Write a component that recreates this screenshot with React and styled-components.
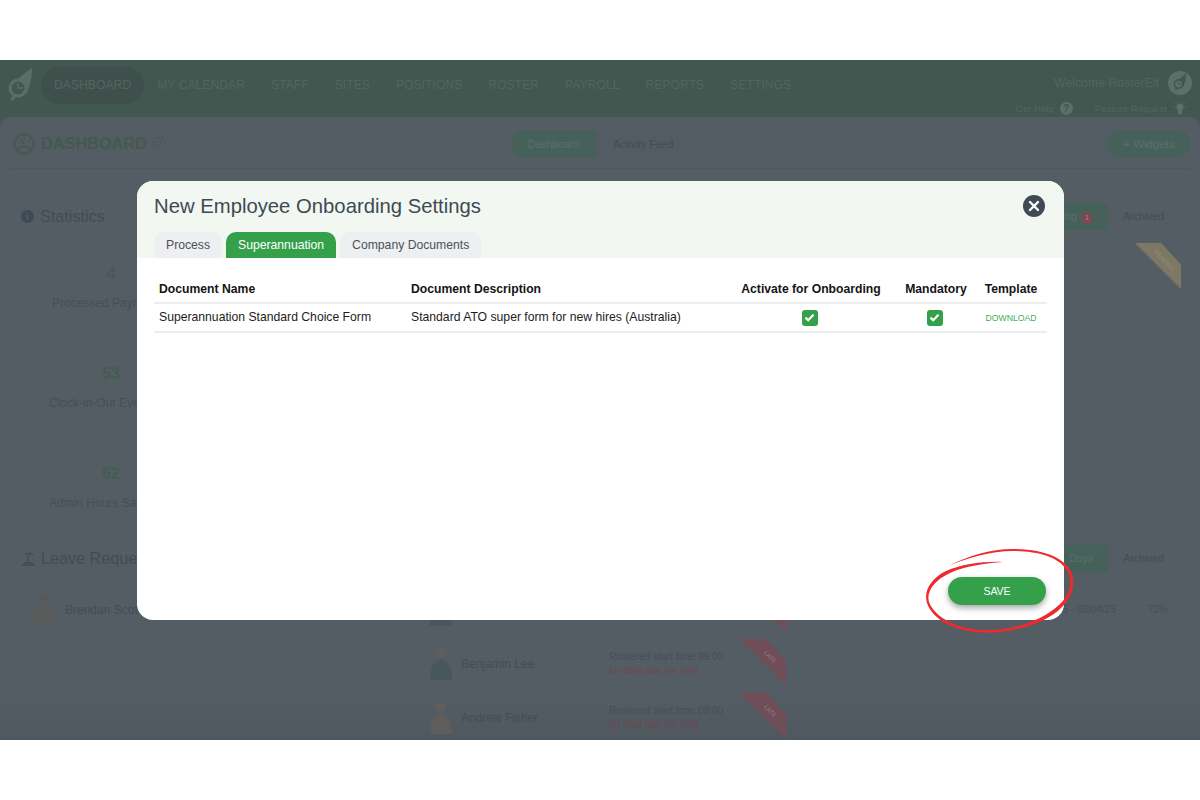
import React from 'react';
import styled, { createGlobalStyle } from 'styled-components';

const Global = createGlobalStyle`
  html, body { margin: 0; padding: 0; background: #fff; }
  body { font-family: "Liberation Sans", Arial, sans-serif; }
  * { box-sizing: border-box; }
`;
const Page = styled.div`
  width: 1200px; height: 800px; padding-top: 60px; background: #fff; overflow: hidden;
`;
const Screen = styled.div`
  position: relative; width: 1200px; height: 680px; background: #41574f; overflow: hidden;
  display: flex; flex-direction: column;
`;
const Nav = styled.header`
  height: 57px; flex: none; display: flex; align-items: flex-start; padding: 7px 8px 0 8px;
`;
const Logo = styled.svg` width: 25px; height: 38px; flex: none; `;
const NavList = styled.nav` display: flex; align-items: center; margin-left: 8px; `;
const NavItem = styled.span`
  font-size: 12.2px; color: #53655f; white-space: nowrap; height: 37px; line-height: 37px;
  padding: 0 13px; border-radius: 19px;
  background: ${p => (p.$active ? '#3f504c' : 'transparent')};
`;
const UserArea = styled.div`
  margin-left: auto; display: flex; flex-direction: column; align-items: flex-end; gap: 6px; margin-top: 4px;
`;
const UserRow = styled.div` display: flex; align-items: center; gap: 9px; font-size: 12.3px; color: #53655f; `;
const Avatar = styled.div`
  width: 24px; height: 24px; border-radius: 50%; background: #5d6f69;
  display: flex; align-items: center; justify-content: center;
`;
const HelpRow = styled.div` display: flex; align-items: center; gap: 22px; font-size: 9.7px; color: #53655f; padding-right: 5px; height: 14px; `;
const HelpLink = styled.span` display: flex; align-items: center; gap: 6px; `;
const HelpDot = styled.span`
  width: 13px; height: 13px; border-radius: 50%; background: #5d6f69; color: #41574f;
  font-size: 10px; font-weight: 700; display: flex; align-items: center; justify-content: center;
`;
const Content = styled.main`
  flex: 1; background: linear-gradient(#545c64 93%, #4f575f 100%); border-radius: 12px 12px 0 0; padding: 0 10px; min-height: 0;
  display: flex; flex-direction: column;
`;
const TopBar = styled.div`
  height: 52px; flex: none; display: grid; grid-template-columns: 1fr auto 1fr; align-items: center;
  border-bottom: 1px solid #4e565e; padding: 2px 0 0 1px;
`;
const PageTitle = styled.div` display: flex; align-items: center; gap: 6px; padding-left: 2px; font-size: 16.3px; font-weight: 700; color: #44594f; `;
const Hint = styled.span`
  width: 13px; height: 13px; border-radius: 50%; border: 1px solid #47594f; color: #47594f;
  font-size: 9px; font-weight: 400; display: flex; align-items: center; justify-content: center;
`;
const Switch = styled.div` display: flex; align-items: center; `;
const SwitchTab = styled.span`
  height: 28px; line-height: 28px; padding: 0 17px; font-size: 10.5px;
  border-radius: ${p => (p.$on ? '14px 0 0 14px' : '0 14px 14px 0')};
  background: ${p => (p.$on ? '#45615a' : '#535b63')};
  color: ${p => (p.$on ? '#5b7069' : '#454c54')};
`;
const WidgetBtn = styled.span`
  justify-self: end; width: 82px; height: 28px; border-radius: 14px; background: #45615a;
  color: #5b7069; font-size: 11.5px; line-height: 28px; text-align: center;
`;
const Grid = styled.div`
  flex: 1; display: grid; grid-template-columns: 392px 392px 1fr; grid-template-rows: 345px 1fr; min-height: 0;
  column-gap: 4px;
`;
const Section = styled.section`
  position: relative; padding: ${p => p.$top}px 8px 0 11px; min-height: 0; overflow: hidden;
`;
const SectionTitle = styled.div`
  display: flex; align-items: center; gap: ${p => p.$gap || 6}px; font-size: 16.2px; color: #434c54; height: 20px;
`;
const InfoDot = styled.span`
  width: 13px; height: 13px; border-radius: 50%; background: #3e4a55; color: #545c64;
  font-size: 10px; font-weight: 700; display: flex; align-items: center; justify-content: center;
`;
const StatGrid = styled.div`
  display: grid; grid-template-columns: 180px 180px; grid-auto-rows: 100px; margin-top: 20px;
`;
const Stat = styled.div` text-align: center; padding-top: 18px; `;
const StatNum = styled.div` font-size: 16px; font-weight: 700; color: #435c52; line-height: 20px; `;
const StatLabel = styled.div`
  font-size: 12px; line-height: 14px; color: #474f57; margin-top: 12px; white-space: nowrap; text-align: left; padding-left: ${p => p.$indent}px;
`;
const SectionHead = styled.div` display: flex; align-items: center; justify-content: space-between; `;
const SmallTabs = styled.div` display: flex; align-items: center; height: 27px; margin-right: 3px; `;
const SmallTab = styled.span`
  font-size: 10.5px; height: 27px; line-height: 27px; padding: 0 15px; white-space: nowrap;
  background: ${p => (p.$on ? '#45615a' : 'transparent')};
  color: ${p => (p.$on ? '#5b7069' : '#454c54')};
`;
const Badge = styled.span`
  display: inline-block; width: 12px; height: 12px; border-radius: 50%; background: #7a4a50; color: #a08086;
  font-size: 8px; line-height: 12px; text-align: center; margin-left: 4px;
`;
const Ribbon = styled.div`
  position: absolute; top: ${p => p.$y}px; right: ${p => p.$x}px; width: 46px; height: 46px;
  clip-path: polygon(0 0, 57% 0, 100% 47%, 100% 100%);
  background: ${p => p.$c};
  display: flex; align-items: center; justify-content: center;
`;
const RibbonText = styled.span`
  font-size: 6px; color: ${p => p.$c}; transform: translate(7px, -5px) rotate(45deg); white-space: nowrap;
`;
const Person = styled.div`
  display: flex; align-items: center; height: 54px; font-size: 12px; color: #454d55; gap: 7px;
`;
const Figure = styled.svg` width: 26px; height: 36px; flex: none; `;
const PersonName = styled.span` width: 141px; white-space: nowrap; `;
const Late = styled.div` font-size: 10.2px; line-height: 14.5px; color: #474f57; white-space: nowrap; `;
const LateRed = styled.div` color: #6d4a50; `;
const LeaveRow = styled.div`
  display: flex; align-items: center; gap: 9px; font-size: 12px; color: #454d55; margin-top: 22px; padding-left: 9px; height: 40px;
`;
const CentreList = styled.div` padding: 69px 0 0 11px; `;
const RightRow = styled.div`
  display: flex; justify-content: flex-end; gap: 32px; font-size: 10px; line-height: 12px; color: #474f57; margin-top: 32px; padding-right: 14px; white-space: nowrap;
`;
const Dialog = styled.div`
  position: absolute; left: 137px; top: 121px; width: 927px; height: 439px; background: #fff;
  border-radius: 16px; overflow: hidden; display: flex; flex-direction: column;
`;
const ModalHead = styled.div`
  height: 77px; flex: none; background: #f2f7f2; padding: 13px 17px 0; position: relative;
  display: flex; flex-direction: column; justify-content: space-between;
`;
const ModalTitle = styled.h2` margin: 0; font-size: 20.3px; line-height: 24px; font-weight: 400; color: #3e4a52; `;
const Tabs = styled.div` display: flex; gap: 4px; `;
const Tab = styled.button`
  height: 26px; border: 0; padding: 0 12px; border-radius: 10px 10px 0 0; font-size: 12.2px;
  font-family: "Liberation Sans", Arial, sans-serif;
  background: ${p => (p.$on ? '#34a14a' : '#edeff1')}; color: ${p => (p.$on ? '#fff' : '#4a525a')};
`;
const Close = styled.button`
  position: absolute; right: 19px; top: 14px; width: 22px; height: 22px; border: 0; padding: 0; border-radius: 50%;
  background: #3f4a54; display: flex; align-items: center; justify-content: center;
`;
const ModalBody = styled.div` flex: 1; padding: 19px 17px 15px; display: flex; flex-direction: column; `;
const Table = styled.div`
  display: grid; grid-template-columns: 252px 319px 172px 78px 72px; align-items: center; font-size: 12.2px; color: #111;
`;
const HeadCell = styled.div`
  height: 27px; padding-left: ${p => (p.$c ? 0 : '5px')}; text-align: ${p => (p.$c ? 'center' : 'left')}; font-weight: 700;
  line-height: 24px; border-bottom: 2px solid #eceeee; white-space: nowrap; color: #151515;
`;
const Cell = styled.div`
  height: 29px; padding: 0 0 2px ${p => (p.$c ? 0 : '5px')}; display: flex; align-items: center; white-space: nowrap;
  justify-content: ${p => (p.$c ? 'center' : 'flex-start')}; border-bottom: 2px solid #eceeee; color: #1c1c1c;
`;
const Check = styled.span`
  width: 16px; height: 16px; margin: 2px 3px 0 0; border-radius: 3px; background: #34a14a; display: flex; align-items: center; justify-content: center;
`;
const Download = styled.span` font-size: 8.7px; margin-top: 2px; color: #3fae55; `;
const Footer = styled.div` margin-top: auto; display: flex; justify-content: flex-end; `;
const Save = styled.button`
  width: 98px; height: 28px; border: 0; border-radius: 14px; background: #34a14a; color: #fff; font-size: 10.5px;
  font-family: "Liberation Sans", Arial, sans-serif; box-shadow: 0 3px 6px rgba(0,0,0,.35); margin-right: 1px;
`;
const Scribble = styled.svg`
  position: absolute; left: 915px; top: 485px; width: 170px; height: 95px; pointer-events: none;
`;

const tick = (
  <svg width="11" height="9" viewBox="0 0 11 9"><path d="M1.500 4.600 4.200 7.200 9.500 1.800" fill="none" stroke="#fff" strokeWidth="2.200" /></svg>
);
const LogoMark = ({ c = '#5a6d67' }) => (
  <g fill="none" stroke={c}>
    <path d="M24 1C18 5 13 9 9 13L18 27C22 20 24 10 24 1Z" fill={c} stroke="none" />
    <circle cx="10" cy="21" r="8" strokeWidth="3" fill={c === '#5a6d67' ? '#41574f' : '#5d6f69'} />
    <path d="M10 16v5h5" strokeWidth="1.500" />
    <path d="M5 27 2 35l6-4" fill={c} stroke="none" />
  </g>
);
const FigureIcon = ({ shirt = '#49565d', skin = '#5f5e5e' }) => (
  <Figure viewBox="0 0 26 36">
    <circle cx="13" cy="7" r="5" fill={skin} />
    <path d="M2 34c0-12 3-20 11-20s11 8 11 20z" fill={shirt} />
  </Figure>
);
const nav = ['DASHBOARD', 'MY CALENDAR', 'STAFF', 'SITES', 'POSITIONS', 'ROSTER', 'PAYROLL', 'REPORTS', 'SETTINGS'];

export default function App() {
  return (
    <Page>
      <Global />
      <Screen>
        <Nav>
          <Logo viewBox="0 0 25 38"><LogoMark /></Logo>
          <NavList>
            {nav.map((n, i) => <NavItem key={n} $active={i === 0}>{n}</NavItem>)}
          </NavList>
          <UserArea>
            <UserRow>Welcome RosterElf
              <Avatar><svg width="14" height="20" viewBox="0 0 25 38"><LogoMark c="#41574f" /></svg></Avatar>
            </UserRow>
            <HelpRow>
              <HelpLink>Get Help <HelpDot>?</HelpDot></HelpLink>
              <HelpLink>Feature Request
                <svg width="14" height="14" viewBox="0 0 14 14"><circle cx="7" cy="6" r="3.500" fill="#5d6f69" /><path d="M5.500 9h3v4h-3zM0 6h2M12 6h2M2 1.500l1.500 1.500M12 1.500 10.500 3M7 0v1" stroke="#5d6f69" fill="#5d6f69" /></svg>
              </HelpLink>
            </HelpRow>
          </UserArea>
        </Nav>
        <Content>
          <TopBar>
            <PageTitle>
              <svg width="22" height="22" viewBox="0 0 22 22"><circle cx="11" cy="11" r="9.500" fill="none" stroke="#44594f" strokeWidth="2.200" /><path d="M11 11 8 6M5.500 16c3-3.500 8-3.500 11 0" stroke="#44594f" strokeWidth="1.800" fill="none" /><path d="M5 9h2M15 9h2M11 4v2" stroke="#44594f" strokeWidth="1.500" /></svg>
              DASHBOARD <Hint>?</Hint>
            </PageTitle>
            <Switch><SwitchTab $on>Dashboard</SwitchTab><SwitchTab>Activity Feed</SwitchTab></Switch>
            <WidgetBtn>+ Widgets</WidgetBtn>
          </TopBar>
          <Grid>
            <Section $top={37}>
              <SectionTitle><InfoDot>i</InfoDot>Statistics</SectionTitle>
              <StatGrid>
                <Stat><StatNum>4</StatNum><StatLabel $indent={31}>Processed Payments</StatLabel></Stat>
                <Stat />
                <Stat><StatNum>53</StatNum><StatLabel $indent={28}>Clock-in-Out Events</StatLabel></Stat>
                <Stat />
                <Stat><StatNum>62</StatNum><StatLabel $indent={28}>Admin Hours Saved</StatLabel></Stat>
                <Stat />
              </StatGrid>
            </Section>
            <Section $top={37} />
            <Section $top={34}>
              <SectionHead>
                <SectionTitle>Pending</SectionTitle>
                <SmallTabs><SmallTab $on>Pending<Badge>1</Badge></SmallTab><SmallTab>Archived</SmallTab></SmallTabs>
              </SectionHead>
              <Ribbon $c="#7d7863" $x={9} $y={74}><RibbonText $c="#8f8c7c">PENDING</RibbonText></Ribbon>
            </Section>
            <Section $top={34}>
              <SectionTitle $gap={5}>
                <svg width="15" height="15" viewBox="0 0 15 15"><path d="M1 14h13M3 12h9M7 11c-1-3 0-6 2-7M5 4c2-2 5-2 7 0" stroke="#3e4a55" fill="none" strokeWidth="1.300" /></svg>
                Leave Requests
              </SectionTitle>
              <LeaveRow><FigureIcon shirt="#595a5a" skin="#5a5958" />Brendan Scott</LeaveRow>
            </Section>
            <Section $top={0}>
              <CentreList>
                <Person><FigureIcon /></Person>
                <Person><FigureIcon /><PersonName>Benjamin Lee</PersonName>
                  <Late>Rostered start time 09:00<LateRed>6h 36m late for shift</LateRed></Late></Person>
                <Person><FigureIcon shirt="#5f5d5b" /><PersonName>Andrew Fisher</PersonName>
                  <Late>Rostered start time 09:00<LateRed>6h 36m late for shift</LateRed></Late></Person>
              </CentreList>
              <Ribbon $c="#6f4e58" $x={12} $y={71}><RibbonText $c="#94767e">LATE</RibbonText></Ribbon>
              <Ribbon $c="#6f4e58" $x={12} $y={125}><RibbonText $c="#94767e">LATE</RibbonText></Ribbon>
              <Ribbon $c="#6f4e58" $x={12} $y={179}><RibbonText $c="#94767e">LATE</RibbonText></Ribbon>
            </Section>
            <Section $top={31}>
              <SectionHead>
                <SectionTitle>Expiring</SectionTitle>
                <SmallTabs><SmallTab $on>Days</SmallTab><SmallTab>Archived</SmallTab></SmallTabs>
              </SectionHead>
              <RightRow><span>31/03/25 - 06/04/25</span><span>72%</span></RightRow>
            </Section>
          </Grid>
        </Content>

        <Dialog>
          <ModalHead>
            <ModalTitle>New Employee Onboarding Settings</ModalTitle>
            <Tabs>
              <Tab>Process</Tab>
              <Tab $on>Superannuation</Tab>
              <Tab>Company Documents</Tab>
            </Tabs>
            <Close aria-label="Close">
              <svg width="12" height="12" viewBox="0 0 12 12"><path d="M2 2l8 8M10 2l-8 8" stroke="#fff" strokeWidth="2.400" strokeLinecap="round" /></svg>
            </Close>
          </ModalHead>
          <ModalBody>
            <Table>
              <HeadCell>Document Name</HeadCell>
              <HeadCell>Document Description</HeadCell>
              <HeadCell $c>Activate for Onboarding</HeadCell>
              <HeadCell $c>Mandatory</HeadCell>
              <HeadCell $c>Template</HeadCell>
              <Cell>Superannuation Standard Choice Form</Cell>
              <Cell>Standard ATO super form for new hires (Australia)</Cell>
              <Cell $c><Check>{tick}</Check></Cell>
              <Cell $c><Check>{tick}</Check></Cell>
              <Cell $c><Download>DOWNLOAD</Download></Cell>
            </Table>
            <Footer><Save>SAVE</Save></Footer>
          </ModalBody>
        </Dialog>

        <Scribble viewBox="915 545 170 95">
          <path fill="#ee2a2e" d="M948 566C968 556 990 549 1013 549C1040 549 1060 556 1069 568C1076 578 1075 594 1062 607C1046 624 1012 633 985 632.500C955 632 933 620 927 603C923 590 932 578 946 571C962 564 985 561 1003 562C985 563.500 965 566 950 573C935 580 926 591 929 602C935 618 958 629.500 985 630C1012 630.500 1040 622 1059 605C1072 593 1073 579 1066 569C1058 557 1037 551 1013 551C990 551 968 558 948 566Z" />
        </Scribble>
      </Screen>
    </Page>
  );
}
